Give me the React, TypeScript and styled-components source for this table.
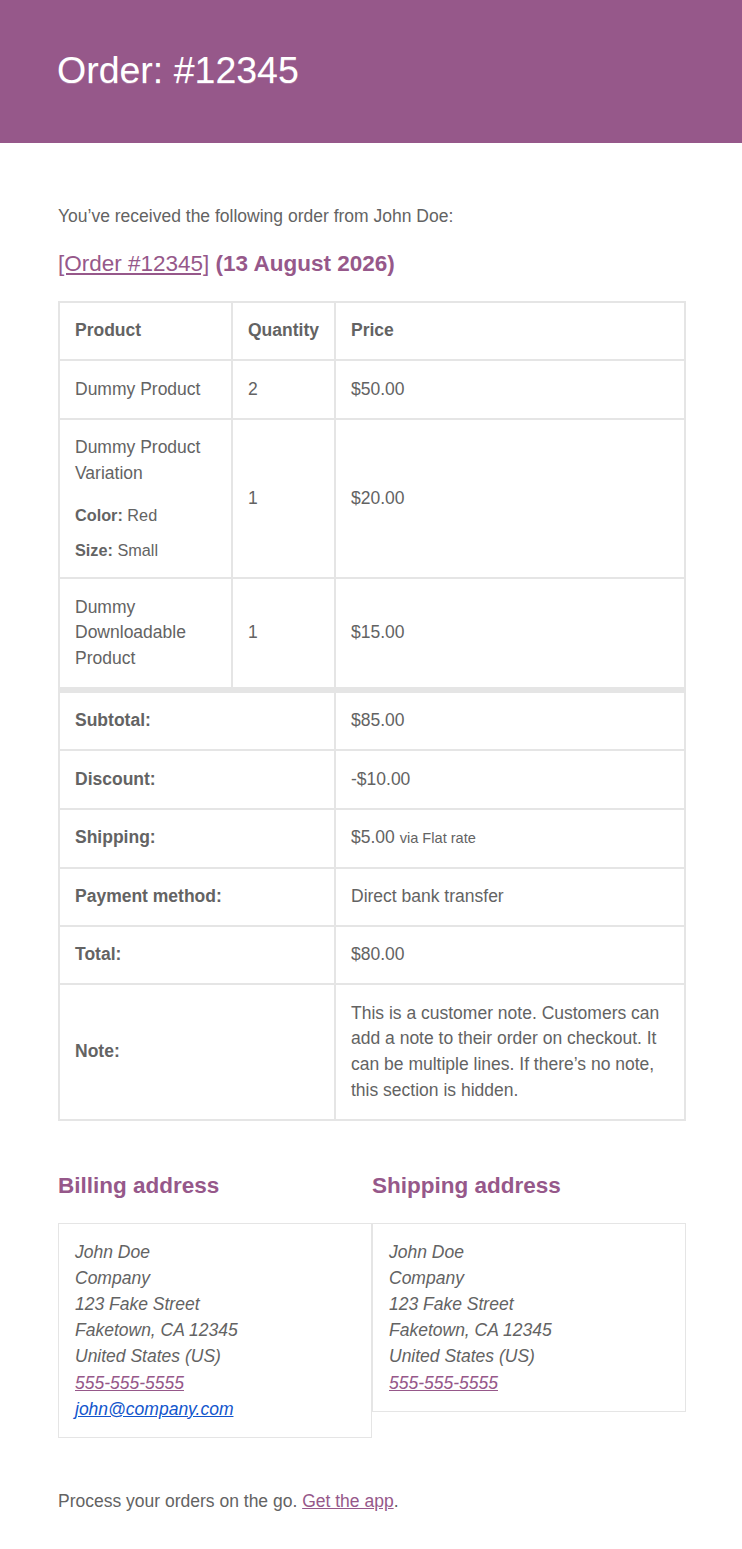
import React from "react";
import styled, { createGlobalStyle } from "styled-components";

const GlobalStyle = createGlobalStyle`
  html, body { margin: 0; padding: 0; background: #ffffff; }
  body { font-family: "Liberation Sans", Helvetica, Arial, sans-serif; }
`;

const PURPLE = "#96588a";
const TEXT = "#636363";
const BORDER = "#e5e5e5";

const Page = styled.div`
  width: 742px;
  min-height: 1549px;
  background: #fff;
  color: ${TEXT};
  font-family: "Liberation Sans", Helvetica, Arial, sans-serif;
`;

const Header = styled.header`
  background: ${PURPLE};
  height: 143px;
  display: flex;
  align-items: center;
  padding: 0 56px 0 57px;
  box-sizing: border-box;
`;

const Title = styled.h1`
  margin: 0 0 2px;
  color: #fff;
  font-size: 37.5px;
  font-weight: 400;
  line-height: 150%;
  text-shadow: 0 1px 0 #ab79a1;
`;

const Body = styled.main`
  padding: 60px 56px 0 58px;
`;

const Para = styled.p`
  margin: 0 0 20px;
  font-size: 17.5px;
  line-height: 150%;
`;

const Heading = styled.h2`
  margin: 0 0 22.5px;
  color: ${PURPLE};
  font-size: 22.5px;
  font-weight: 700;
  line-height: 130%;
`;

const HeadingLink = styled.a`
  color: ${PURPLE};
  font-weight: 400;
  text-decoration: underline;
`;

const Table = styled.table`
  width: 626px;
  table-layout: fixed;
  border-collapse: collapse;
  border: 2px solid ${BORDER};
  margin: 0 0 50px;
  font-size: 17.5px;
  line-height: 25.75px;
`;

const Cell = styled.td<{ $sep?: boolean }>`
  border: 2px solid ${BORDER};
  ${(p) => (p.$sep ? `border-top: 6px solid ${BORDER};` : "")}
  padding: 15.25px 15px;
  text-align: left;
  vertical-align: middle;
  color: ${TEXT};
  word-wrap: break-word;
`;

const HeadCell = styled(Cell).attrs({ as: "th" })`
  font-weight: 700;
`;

const MetaList = styled.ul`
  list-style: none;
  margin: 16.5px 0 0;
  padding: 0;
  font-size: 16.25px;
  line-height: 24.4px;
`;

const MetaItem = styled.li`
  margin: 10.5px 0 0;
  &:first-child { margin-top: 0; }
`;

const Small = styled.small`
  font-size: 14.6px;
`;

const AddressGrid = styled.div`
  display: grid;
  grid-template-columns: 314px 314px;
  align-items: start;
  margin: 0 0 50px;
`;

const AddressCol = styled.div`
  display: flex;
  flex-direction: column;
`;

const Address = styled.address`
  font-style: italic;
  font-size: 17.5px;
  line-height: 26.2px;
  padding: 15px 16px;
  border: 1px solid ${BORDER};
  color: ${TEXT};
  display: flex;
  flex-direction: column;
`;

const PhoneLink = styled.a`
  color: ${PURPLE};
  text-decoration: underline;
`;

const MailLink = styled.a`
  color: #1155cc;
  text-decoration: underline;
`;

const FooterLink = styled.a`
  color: ${PURPLE};
  text-decoration: underline;
`;

const items = [
  { name: "Dummy Product", qty: 2, price: "$50.00", meta: [] as [string, string][] },
  {
    name: "Dummy Product Variation",
    qty: 1,
    price: "$20.00",
    meta: [
      ["Color:", "Red"],
      ["Size:", "Small"],
    ] as [string, string][],
  },
  { name: "Dummy Downloadable Product", qty: 1, price: "$15.00", meta: [] as [string, string][] },
];

const AddressBlock = ({ title, email }: { title: string; email?: boolean }) => (
  <AddressCol>
    <Heading>{title}</Heading>
    <Address>
      <span>John Doe</span>
      <span>Company</span>
      <span>123 Fake Street</span>
      <span>Faketown, CA 12345</span>
      <span>United States (US)</span>
      <span>
        <PhoneLink href="#">555-555-5555</PhoneLink>
      </span>
      {email && (
        <span>
          <MailLink href="#">john@company.com</MailLink>
        </span>
      )}
    </Address>
  </AddressCol>
);

export default function App() {
  return (
    <Page>
      <GlobalStyle />
      <Header>
        <Title>Order: #12345</Title>
      </Header>
      <Body>
        <Para>You’ve received the following order from John Doe:</Para>
        <Heading>
          <HeadingLink href="#">[Order #12345]</HeadingLink> (13 August 2026)
        </Heading>
        <Table>
          <colgroup>
            <col style={{ width: 173 }} />
            <col style={{ width: 103 }} />
            <col style={{ width: 350 }} />
          </colgroup>
          <thead>
            <tr>
              <HeadCell>Product</HeadCell>
              <HeadCell>Quantity</HeadCell>
              <HeadCell>Price</HeadCell>
            </tr>
          </thead>
          <tbody>
            {items.map((it) => (
              <tr key={it.name}>
                <Cell>
                  {it.name}
                  {it.meta.length > 0 && (
                    <MetaList>
                      {it.meta.map(([k, v]) => (
                        <MetaItem key={k}>
                          <strong>{k}</strong> {v}
                        </MetaItem>
                      ))}
                    </MetaList>
                  )}
                </Cell>
                <Cell>{it.qty}</Cell>
                <Cell>{it.price}</Cell>
              </tr>
            ))}
          </tbody>
          <tfoot>
            <tr>
              <HeadCell $sep colSpan={2}>Subtotal:</HeadCell>
              <Cell $sep>$85.00</Cell>
            </tr>
            <tr>
              <HeadCell colSpan={2}>Discount:</HeadCell>
              <Cell>-$10.00</Cell>
            </tr>
            <tr>
              <HeadCell colSpan={2}>Shipping:</HeadCell>
              <Cell>
                $5.00 <Small>via Flat rate</Small>
              </Cell>
            </tr>
            <tr>
              <HeadCell colSpan={2}>Payment method:</HeadCell>
              <Cell>Direct bank transfer</Cell>
            </tr>
            <tr>
              <HeadCell colSpan={2}>Total:</HeadCell>
              <Cell>$80.00</Cell>
            </tr>
            <tr>
              <HeadCell colSpan={2}>Note:</HeadCell>
              <Cell>
                This is a customer note. Customers can add a note to their order on checkout. It can be
                multiple lines. If there’s no note, this section is hidden.
              </Cell>
            </tr>
          </tfoot>
        </Table>
        <AddressGrid>
          <AddressBlock title="Billing address" email />
          <AddressBlock title="Shipping address" />
        </AddressGrid>
        <Para>
          Process your orders on the go. <FooterLink href="#">Get the app</FooterLink>.
        </Para>
      </Body>
    </Page>
  );
}
